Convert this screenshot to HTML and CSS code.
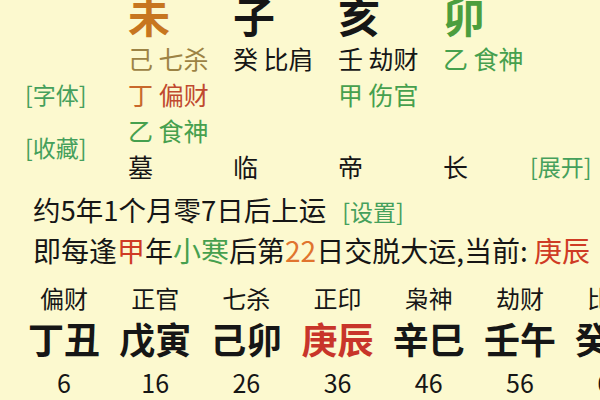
FILE: index.html
```html
<!DOCTYPE html>
<html lang="zh">
<head>
<meta charset="utf-8">
<link rel="stylesheet" href="styles.css">
</head>
<body>
<div class="page">
  <div class="chart">
    <div class="side">
      <div class="link l1">[字体]</div>
      <div class="link l2">[收藏]</div>
    </div>
    <div class="pillars">
      <div class="row big">
        <div class="cell earth">未</div>
        <div class="cell">子</div>
        <div class="cell">亥</div>
        <div class="cell wood">卯</div>
      </div>
      <div class="row">
        <div class="cell olive">己 七杀</div>
        <div class="cell">癸 比肩</div>
        <div class="cell">壬 劫财</div>
        <div class="cell green">乙 食神</div>
      </div>
      <div class="row">
        <div class="cell"><span class="fire">丁</span> <span class="red">偏财</span></div>
        <div class="cell"></div>
        <div class="cell green">甲 伤官</div>
        <div class="cell"></div>
      </div>
      <div class="row">
        <div class="cell green">乙 食神</div>
        <div class="cell"></div>
        <div class="cell"></div>
        <div class="cell"></div>
      </div>
      <div class="row">
        <div class="cell">墓</div>
        <div class="cell">临</div>
        <div class="cell">帝</div>
        <div class="cell narrow">长</div>
        <div class="link">[展开]</div>
      </div>
    </div>
  </div>
  <div class="line first">约5年1个月零7日后上运<span class="link small">[设置]</span></div>
  <div class="line second">即每逢<span class="red2">甲</span>年<span class="green">小寒</span>后第<span class="orange">22</span>日交脱大运,当前: <span class="red2">庚辰</span></div>
  <div class="luck">
    <div class="col"><div class="god">偏财</div><div class="gz">丁丑</div><div class="age">6</div></div>
    <div class="col"><div class="god">正官</div><div class="gz">戊寅</div><div class="age">16</div></div>
    <div class="col"><div class="god">七杀</div><div class="gz">己卯</div><div class="age">26</div></div>
    <div class="col"><div class="god">正印</div><div class="gz cur">庚辰</div><div class="age">36</div></div>
    <div class="col"><div class="god">枭神</div><div class="gz">辛巳</div><div class="age">46</div></div>
    <div class="col"><div class="god">劫财</div><div class="gz">壬午</div><div class="age">56</div></div>
    <div class="col"><div class="god">比肩</div><div class="gz">癸未</div><div class="age">66</div></div>
  </div>
</div>
</body>
</html>
```

FILE: styles.css
```css
html, body {
  margin: 0;
  padding: 0;
  background: #fcf9cf;
}
body {
  width: 600px;
  height: 400px;
  overflow: hidden;
  font-family: "Noto Sans CJK SC", "Noto Sans", sans-serif;
  color: #161616;
}
.page {
  width: 600px;
  height: 400px;
  overflow: hidden;
}
.chart {
  display: flex;
  height: 183.5px;
}
.side {
  width: 128px;
  flex: none;
  padding-left: 25px;
  box-sizing: border-box;
}
.link {
  color: #45a05c;
  font-size: 23px;
  line-height: 36px;
  white-space: nowrap;
}
.l1 { margin-top: 75.5px; }
.l2 { margin-top: 17.5px; }
.pillars {
  display: flex;
  flex-direction: column;
}
.row {
  display: flex;
  height: 36px;
  font-size: 25px;
  line-height: 36px;
}
.row.big {
  height: 28px;
  line-height: 30px;
  font-size: 42px;
  font-weight: 700;
  margin-bottom: 11.5px;
}
.cell {
  width: 105px;
  flex: none;
  white-space: nowrap;
}
.cell.narrow { width: 87px; }
.earth { color: #c7761f; }
.wood { color: #4c9e3e; }
.olive { color: #9c8345; }
.green { color: #46a04e; }
.fire { color: #c8682c; }
.red { color: #c0492f; }
.red2 { color: #cf3b24; }
.orange { color: #e0742e; }
.line {
  padding-left: 33px;
  font-size: 27.5px;
  line-height: 41px;
  white-space: nowrap;
}
.line.second { font-size: 28px; }
.line.first { margin-top: 5.5px; }
.line .small { font-size: 23px; margin-left: 16px; }
.luck {
  display: flex;
  padding-left: 18.4px;
  margin-top: 12px;
}
.col {
  width: 91.2px;
  flex: none;
  display: flex;
  flex-direction: column;
  align-items: center;
}
.god {
  font-size: 24px;
  line-height: 30px;
  white-space: nowrap;
}
.gz {
  font-size: 36px;
  font-weight: 700;
  line-height: 40px;
  margin-top: 5px;
  white-space: nowrap;
}
.gz.cur { color: #c8352a; }
.age {
  font-size: 25px;
  line-height: 30px;
  margin-top: 9px;
}
```
